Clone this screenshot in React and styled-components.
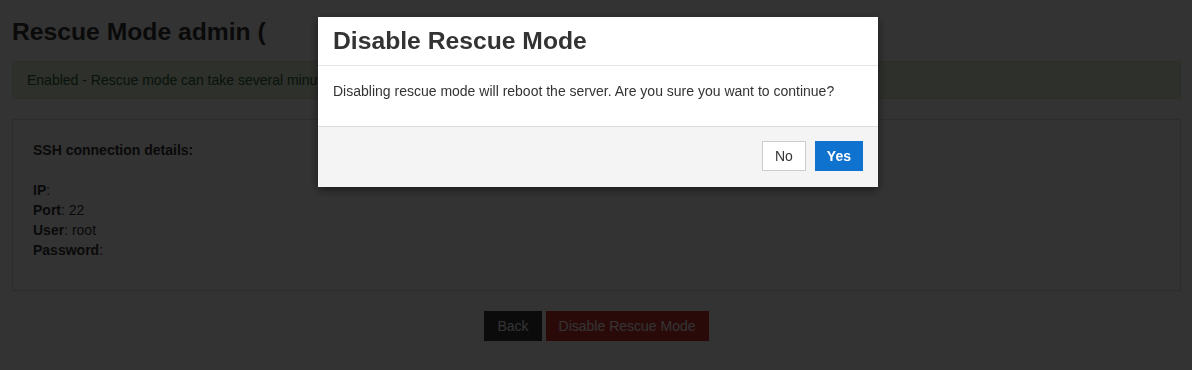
import styled, { createGlobalStyle } from "styled-components";

const GlobalStyle = createGlobalStyle`
  html, body {
    margin: 0;
    padding: 0;
    background: #fff;
  }
  body {
    font-family: "Liberation Sans", Arial, Helvetica, sans-serif;
    font-size: 14px;
    line-height: 20px;
    color: #333;
  }
`;

const Page = styled.div`
  padding: 0 11px 0 12px;
`;

const Title = styled.h1`
  margin: 19px 0 16px;
  font-size: 24.7px;
  line-height: 26px;
  font-weight: 700;
  color: #333;
`;

const Alert = styled.div`
  padding: 8px 14px;
  margin-bottom: 20px;
  background: #dff0d8;
  border: 1px solid #d6e9c6;
  color: #2f5f30;
`;

const Panel = styled.div`
  border: 1px solid #ddd;
  padding: 20px 20px 30px;
`;

const PanelHeading = styled.div`
  font-weight: 700;
  margin-bottom: 20px;
`;

const DetailRow = styled.div`
  & b {
    font-weight: 700;
  }
`;

const Actions = styled.div`
  display: flex;
  justify-content: center;
  gap: 4px;
  margin-top: 20px;
`;

const Button = styled.button`
  height: 30px;
  padding: 0 ${(p) => p.$pad || 12}px;
  font-family: inherit;
  font-size: 14px;
  font-weight: ${(p) => (p.$bold ? 700 : 400)};
  border: 1px solid ${(p) => p.$border || p.$bg};
  background: ${(p) => p.$bg};
  color: ${(p) => p.$color};
  border-radius: 0;
  cursor: pointer;
`;

const Overlay = styled.div`
  position: fixed;
  inset: 0;
  background: rgba(0, 0, 0, 0.8);
  display: flex;
  justify-content: center;
  align-items: flex-start;
  padding: 17px 0 0 4px;
`;

const Modal = styled.div`
  width: 560px;
  background: #fff;
  box-shadow: 0 3px 9px rgba(0, 0, 0, 0.5);
`;

const ModalHeader = styled.div`
  padding: 11px 15px 11px;
  border-bottom: 1px solid #e5e5e5;
  & h3 {
    margin: 0;
    font-size: 24.7px;
    line-height: 26px;
    font-weight: 700;
    color: #333;
  }
`;

const ModalBody = styled.div`
  padding: 15px;
  & p {
    margin: 0 0 10px;
  }
`;

const ModalFooter = styled.div`
  display: flex;
  justify-content: flex-end;
  gap: 9px;
  padding: 14px 15px 16px;
  background: #f4f4f4;
  border-top: 1px solid #ddd;
`;

export default function App() {
  return (
    <>
      <GlobalStyle />
      <Page>
        <Title>Rescue Mode admin (</Title>
        <Alert>
          Enabled - Rescue mode can take several minutes to become available.
        </Alert>
        <Panel>
          <PanelHeading>SSH connection details:</PanelHeading>
          <DetailRow>
            <b>IP</b>:
          </DetailRow>
          <DetailRow>
            <b>Port</b>: 22
          </DetailRow>
          <DetailRow>
            <b>User</b>: root
          </DetailRow>
          <DetailRow>
            <b>Password</b>:
          </DetailRow>
        </Panel>
        <Actions>
          <Button $bg="#373737" $color="#fff">
            Back
          </Button>
          <Button $bg="#d2322d" $color="#fff">
            Disable Rescue Mode
          </Button>
        </Actions>
      </Page>
      <Overlay>
        <Modal>
          <ModalHeader>
            <h3>Disable Rescue Mode</h3>
          </ModalHeader>
          <ModalBody>
            <p>
              Disabling rescue mode will reboot the server. Are you sure you
              want to continue?
            </p>
          </ModalBody>
          <ModalFooter>
            <Button $bg="#fff" $border="#ccc" $color="#333">
              No
            </Button>
            <Button $bg="#1072cf" $color="#fff" $pad={11} $bold>
              Yes
            </Button>
          </ModalFooter>
        </Modal>
      </Overlay>
    </>
  );
}
